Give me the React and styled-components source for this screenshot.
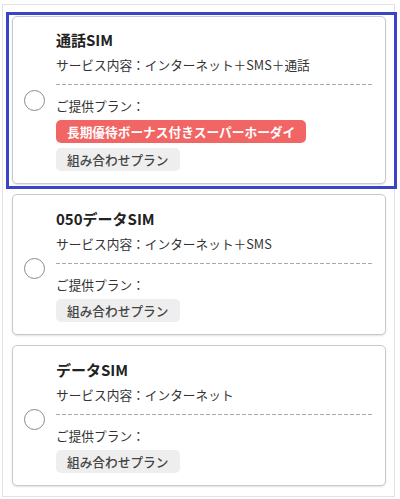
import React from "react";
import styled, { createGlobalStyle } from "styled-components";

const GlobalStyle = createGlobalStyle`
  body {
    margin: 0;
    background: #fff;
    font-family: "Noto Sans CJK JP", "Noto Sans", sans-serif;
    color: #333;
  }
`;

const Frame = styled.div`
  box-sizing: border-box;
  width: 393px;
  margin: 4px 0 0 2px;
  padding: 11px 8px 10px 9px;
  border: 1px solid #e2e2e2;
  display: flex;
  flex-direction: column;
  gap: 10px;
`;

const Card = styled.div`
  position: relative;
  display: flex;
  align-items: center;
  border: 1px solid #c9c9c9;
  border-radius: 5px;
  box-shadow: 0 1px 2px rgba(0, 0, 0, 0.12);
  background: #fff;
  padding: ${(p) => (p.$selected ? "13px 11px 12px 0" : "14px 11px 12px 0")};
`;

const Highlight = styled.div`
  position: absolute;
  top: -5px;
  left: -7px;
  right: -12px;
  bottom: -6px;
  border: 3px solid #3a44c8;
  pointer-events: none;
`;

const Radio = styled.span`
  flex: none;
  width: 21px;
  height: 21px;
  box-sizing: border-box;
  border: 1px solid #8a8a8a;
  border-radius: 50%;
  margin: ${(p) => (p.$selected ? "0 11px 0 11px" : "5px 11px 0 11px")};
`;

const Body = styled.div`
  flex: 1;
  min-width: 0;
`;

const Title = styled.div`
  font-size: 15px;
  line-height: 20px;
  font-weight: 700;
  color: #222;
`;

const Line = styled.div`
  font-size: 12.7px;
  line-height: 20px;
  color: #333;
  margin-top: ${(p) => p.$top || 0}px;
`;

const Divider = styled.div`
  height: 1px;
  margin-top: 9px;
  background-image: repeating-linear-gradient(
    90deg,
    #a9a9a9 0 4px,
    transparent 4px 6px
  );
`;

const Tags = styled.div`
  display: flex;
  flex-direction: column;
  align-items: flex-start;
  gap: 5px;
  margin-top: 4px;
`;

const Tag = styled.span`
  display: inline-block;
  height: 23px;
  line-height: 23px;
  padding: 0 11px;
  border-radius: 5px;
  font-size: 12.7px;
  font-weight: ${(p) => (p.$accent ? 700 : 500)};
  color: ${(p) => (p.$accent ? "#fff" : "#444")};
  background: ${(p) => (p.$accent ? "#f26565" : "#eeeeee")};
`;

const plans = [
  {
    title: "通話SIM",
    service: "インターネット＋SMS＋通話",
    tags: ["長期優待ボーナス付きスーパーホーダイ", "組み合わせプラン"],
    selected: true,
  },
  {
    title: "050データSIM",
    service: "インターネット＋SMS",
    tags: ["組み合わせプラン"],
  },
  {
    title: "データSIM",
    service: "インターネット",
    tags: ["組み合わせプラン"],
  },
];

function PlanCard({ plan }) {
  return (
    <Card $selected={plan.selected}>
      {plan.selected && <Highlight />}
      <Radio $selected={plan.selected} />
      <Body>
        <Title>{plan.title}</Title>
        <Line $top={5}>サービス内容：{plan.service}</Line>
        <Divider />
        <Line $top={11}>ご提供プラン：</Line>
        <Tags>
          {plan.tags.map((t, i) => (
            <Tag key={t} $accent={plan.tags.length > 1 && i === 0}>
              {t}
            </Tag>
          ))}
        </Tags>
      </Body>
    </Card>
  );
}

export default function App() {
  return (
    <>
      <GlobalStyle />
      <Frame>
        {plans.map((p) => (
          <PlanCard key={p.title} plan={p} />
        ))}
      </Frame>
    </>
  );
}
